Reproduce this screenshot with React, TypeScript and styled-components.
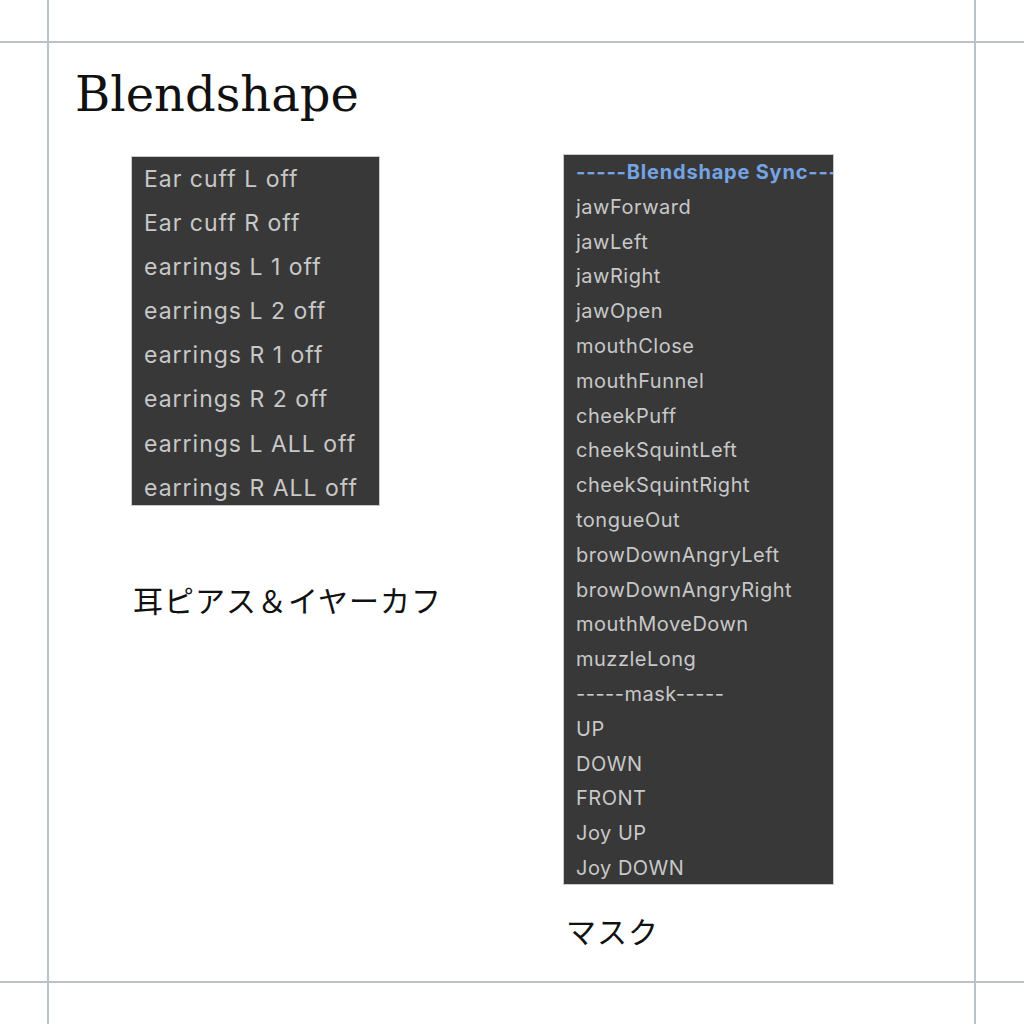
import styled, { createGlobalStyle } from "styled-components";

const GlobalStyle = createGlobalStyle`
  html, body {
    margin: 0;
    padding: 0;
    background: #ffffff;
  }
`;

const ruleColor = "#b9c1c9";

// Page with the ruled horizontal lines
const Page = styled.div`
  width: 1024px;
  height: 1024px;
  overflow: hidden;
  background:
    linear-gradient(${ruleColor}, ${ruleColor}) 0 41px / 100% 2px no-repeat,
    linear-gradient(${ruleColor}, ${ruleColor}) 0 981px / 100% 2px no-repeat,
    #ffffff;
`;

// Sheet between the two vertical rules
const Sheet = styled.div`
  box-sizing: border-box;
  margin-left: 47px;
  width: 929px;
  height: 100%;
  border-left: 2px solid ${ruleColor};
  border-right: 2px solid ${ruleColor};
  padding: 70px 0 0 26px;
`;

const Title = styled.h1`
  margin: 0;
  font-family: "DejaVu Serif", "Liberation Serif", serif;
  font-weight: 400;
  font-size: 48px;
  line-height: 48px;
  color: #111;
`;

const Columns = styled.div`
  display: grid;
  grid-template-columns: 432px auto;
  align-items: start;
  margin-top: 37px;
  padding-left: 56px;
`;

const Column = styled.div<{ $shift?: number }>`
  display: flex;
  flex-direction: column;
  align-items: flex-start;
  margin-top: ${({ $shift = 0 }) => $shift}px;
`;

const Panel = styled.ul<{
  $width: number;
  $height?: number;
  $row: number;
  $size: number;
  $spacing: number;
}>`
  box-sizing: border-box;
  list-style: none;
  margin: 0;
  padding: 0 0 0 12px;
  width: ${({ $width }) => $width}px;
  height: ${({ $height }) => ($height ? `${$height}px` : "auto")};
  background: #383838;
  border: 1px solid #c9c9c9;
  overflow: hidden;
  font-family: Inter, "Noto Sans", sans-serif;
  font-size: ${({ $size }) => $size}px;
  letter-spacing: ${({ $spacing }) => $spacing}px;
  color: #c8c8c8;

  li {
    height: ${({ $row }) => $row}px;
    line-height: ${({ $row }) => $row}px;
    white-space: nowrap;
  }
`;

// Section header, cut off by the panel edge as in the editor
const Heading = styled.li`
  color: #74a4e4;
  font-weight: 700;
  letter-spacing: 0.8px;
`;

const Caption = styled.p<{ $gap: number; $indent: number }>`
  margin: ${({ $gap }) => $gap}px 0 0 ${({ $indent }) => $indent}px;
  font-family: "Noto Sans CJK JP", sans-serif;
  font-size: 30px;
  line-height: 30px;
  color: #111;
  letter-spacing: 1px;
`;

const accessories = [
  "Ear cuff L off",
  "Ear cuff R off",
  "earrings L 1 off",
  "earrings L 2 off",
  "earrings R 1 off",
  "earrings R 2 off",
  "earrings L ALL off",
  "earrings R ALL off",
];

const shapes = [
  "jawForward",
  "jawLeft",
  "jawRight",
  "jawOpen",
  "mouthClose",
  "mouthFunnel",
  "cheekPuff",
  "cheekSquintLeft",
  "cheekSquintRight",
  "tongueOut",
  "browDownAngryLeft",
  "browDownAngryRight",
  "mouthMoveDown",
  "muzzleLong",
  "-----mask-----",
  "UP",
  "DOWN",
  "FRONT",
  "Joy UP",
  "Joy DOWN",
];

export default function App() {
  return (
    <>
      <GlobalStyle />
      <Page>
        <Sheet>
          <Title>Blendshape</Title>
          <Columns>
            <Column $shift={1}>
              <Panel
                $width={249}
                $height={350}
                $row={44.1}
                $size={23}
                $spacing={1}
              >
                {accessories.map((item) => (
                  <li key={item}>{item}</li>
                ))}
              </Panel>
              <Caption $gap={78} $indent={2}>
                耳ピアス＆イヤーカフ
              </Caption>
            </Column>
            <Column $shift={-1}>
              <Panel
                $width={271}
                $height={731}
                $row={34.8}
                $size={20}
                $spacing={0.5}
              >
                <Heading>-----Blendshape Sync---</Heading>
                {shapes.map((item) => (
                  <li key={item}>{item}</li>
                ))}
              </Panel>
              <Caption $gap={30} $indent={3}>
                マスク
              </Caption>
            </Column>
          </Columns>
        </Sheet>
      </Page>
    </>
  );
}
